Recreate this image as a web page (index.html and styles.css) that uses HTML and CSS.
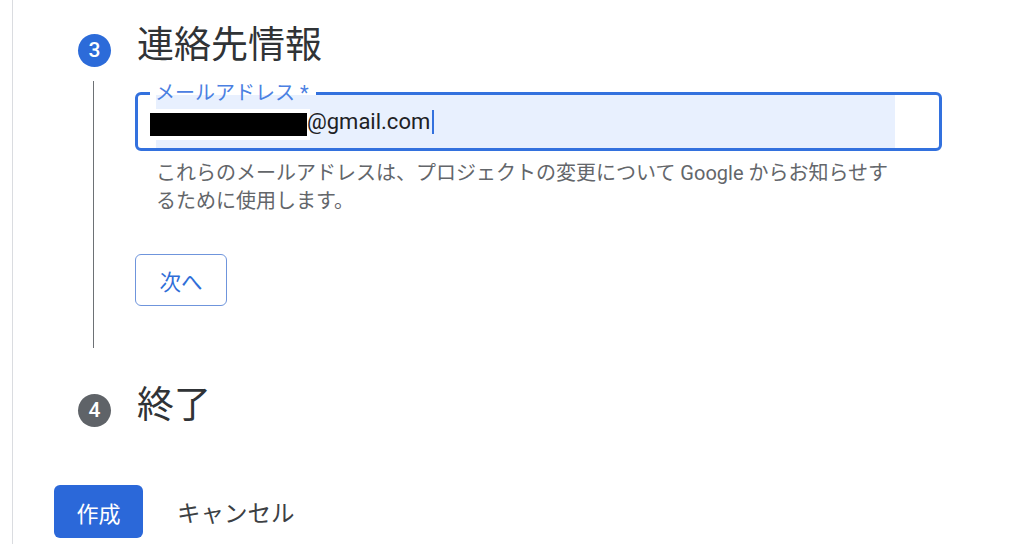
FILE: index.html
```html
<!DOCTYPE html>
<html lang="ja">
<head>
<meta charset="utf-8">
<link rel="stylesheet" href="styles.css">
</head>
<body>
<div class="page">
  <section class="step">
    <div class="step-head">
      <span class="badge badge-active">3</span>
      <h2 class="step-title">連絡先情報</h2>
    </div>
    <div class="step-body">
      <div class="field">
        <span class="field-label">メールアドレス *</span>
        <div class="field-box">
          <div class="autofill">
            <span class="redact"><span class="redact-bar"></span></span><span class="value">@gmail.com</span><span class="caret"></span>
          </div>
        </div>
      </div>
      <p class="hint">これらのメールアドレスは、プロジェクトの変更について Google からお知らせするために使用します。</p>
      <button class="btn-outline">次へ</button>
    </div>
  </section>
  <section class="step step-last">
    <div class="step-head">
      <span class="badge badge-idle">4</span>
      <h2 class="step-title">終了</h2>
    </div>
  </section>
  <div class="actions">
    <button class="btn-primary">作成</button>
    <button class="btn-text">キャンセル</button>
  </div>
</div>
</body>
</html>
```
FILE: styles.css
```css
html, body {
  margin: 0;
  padding: 0;
  background: #ffffff;
}
body {
  font-family: Roboto, "Noto Sans CJK JP", sans-serif;
  color: #3c4043;
  width: 1024px;
  height: 544px;
  overflow: hidden;
}
.page {
  margin-left: 12px;
  border-left: 1px solid #dadce0;
  height: 544px;
  box-sizing: border-box;
  padding-top: 34px;
  display: flex;
  flex-direction: column;
}
.step-head {
  display: flex;
  align-items: flex-start;
  padding-left: 65px;
  gap: 26px;
  height: 33px;
}
.badge {
  flex: none;
  width: 33px;
  height: 33px;
  border-radius: 50%;
  color: #fff;
  font-size: 21px;
  font-weight: 500;
  display: flex;
  align-items: center;
  justify-content: center;
  line-height: 1;
}
.badge-active { background: #2c6bd9; }
.badge-idle { background: #5f6368; }
.step-title {
  margin: -7px 0 0 0;
  font-size: 37px;
  font-weight: 400;
  line-height: 37px;
  color: #303336;
  white-space: nowrap;
}
.step-body {
  margin-left: 80px;
  margin-top: 14px;
  border-left: 1.5px solid #6d7175;
  padding-left: 41px;
  padding-top: 11px;
  padding-bottom: 42px;
  display: flex;
  flex-direction: column;
  align-items: flex-start;
}
.field {
  position: relative;
  width: 807px;
}
.field-box {
  box-sizing: border-box;
  height: 59px;
  border: 3px solid #3371de;
  border-radius: 6px;
  padding: 0 44px 0 18px;
  display: flex;
}
.autofill {
  flex: 1;
  background: #e8f0fe;
  display: flex;
  align-items: center;
  position: relative;
  font-size: 22px;
  color: #202124;
}
.field-label {
  position: absolute;
  left: 15px;
  top: -11px;
  z-index: 2;
  padding: 0 7px 0 5px;
  font-size: 20px;
  line-height: 24px;
  color: #4b80e2;
  white-space: nowrap;
  background: linear-gradient(to bottom, #fff 0, #fff 14px, transparent 14px);
}
.redact {
  display: inline-flex;
  align-items: center;
  margin-left: -6px;
  width: 160px;
  height: 31px;
  background: #fff;
  margin-top: 6px;
}
.redact-bar {
  display: block;
  width: 157px;
  height: 23px;
  background: #000;
}
.value {
  margin-left: -3px;
  line-height: 1;
}
.caret {
  display: inline-block;
  width: 2px;
  height: 24px;
  background: #3371de;
  margin-left: 2px;
}
.hint {
  margin: 9px 0 0 21px;
  width: 750px;
  font-size: 20px;
  line-height: 27.5px;
  color: #63666a;
}
.btn-outline {
  margin-top: 39px;
  width: 92px;
  height: 52px;
  box-sizing: border-box;
  border: 1.5px solid #6f95dc;
  border-radius: 6px;
  background: #fff;
  color: #2f6ed8;
  font-family: Roboto, "Noto Sans CJK JP", sans-serif;
  font-size: 21.5px;
  padding: 0;
}
.step-last {
  margin-top: 46px;
}
.actions {
  margin-top: 58px;
  padding-left: 41px;
  display: flex;
  align-items: center;
  gap: 10px;
}
.btn-primary {
  width: 89px;
  height: 53px;
  border: none;
  border-radius: 6px;
  background: #2b68d9;
  color: #fff;
  font-family: Roboto, "Noto Sans CJK JP", sans-serif;
  font-size: 22px;
  padding: 0;
}
.btn-text {
  border: none;
  background: transparent;
  color: #3c4043;
  font-family: Roboto, "Noto Sans CJK JP", sans-serif;
  font-size: 23.5px;
  padding: 0 24px;
  height: 53px;
}
```
